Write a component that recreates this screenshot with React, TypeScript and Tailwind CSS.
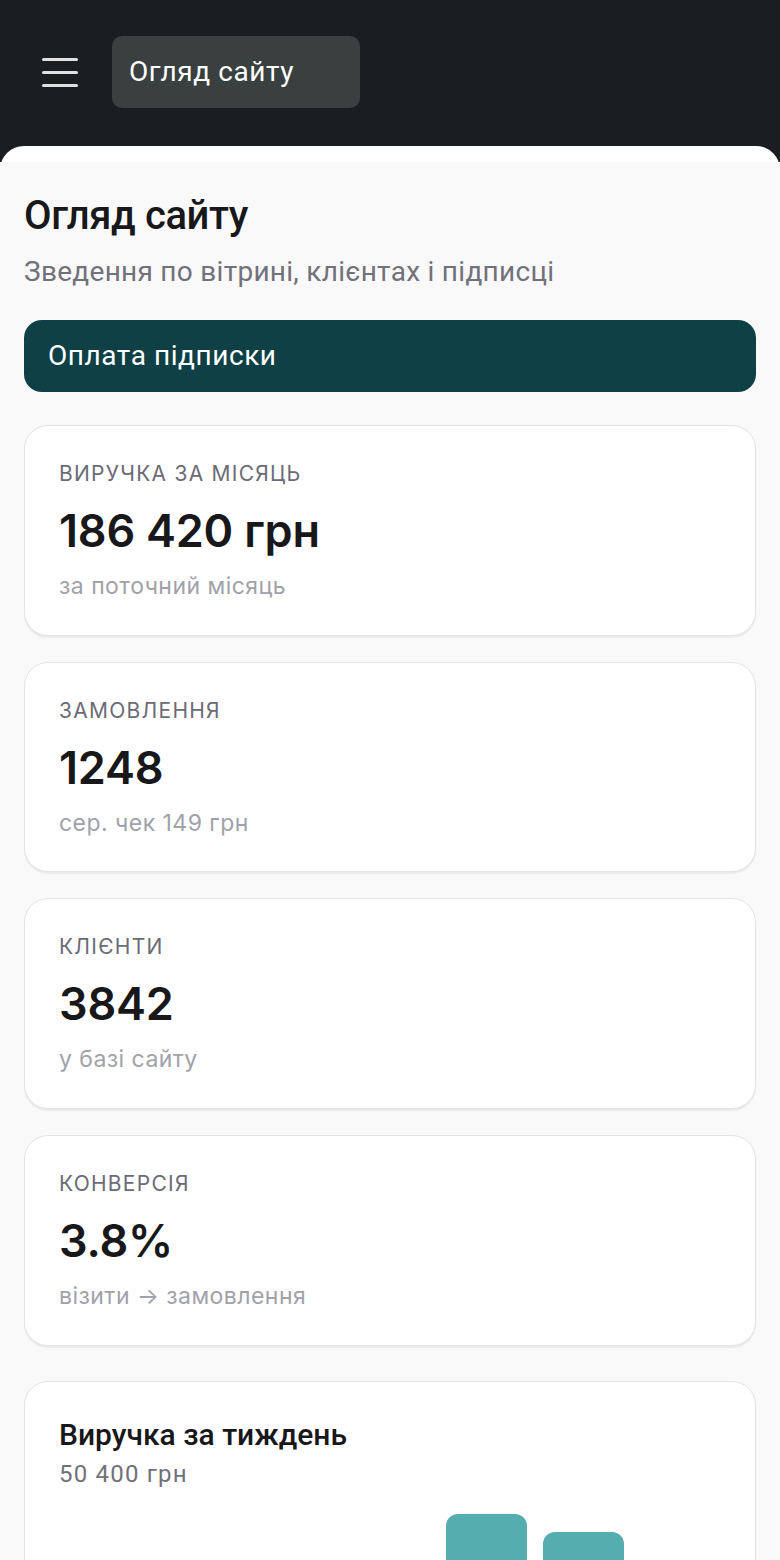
import React from 'react'

interface Stat {
  label: string
  value: string
  note: string
}

const STATS: Stat[] = [
  { label: 'Виручка за місяць', value: '186 420 грн', note: 'за поточний місяць' },
  { label: 'Замовлення', value: '1248', note: 'сер. чек 149 грн' },
  { label: 'Клієнти', value: '3842', note: 'у базі сайту' },
  { label: 'Конверсія', value: '3.8%', note: 'візити → замовлення' },
]

// week revenue, share of the max day
const WEEK = [52, 61, 58, 70, 100, 91, 66]

const roboto = { fontFamily: 'Roboto, "Noto Sans", sans-serif' }
const inter = { fontFamily: 'Inter, "Noto Sans", sans-serif' }

function StatCard({ stat }: { stat: Stat }) {
  return (
    <div
      className="bg-white rounded-[24px] border border-[#e4e4e7] shadow-[0_2px_1px_rgba(0,0,0,0.06)] px-[34px] pt-[35px] pb-[33.67px]"
      style={inter}
    >
      <div className="text-[21px] leading-[26px] uppercase tracking-[0.06em] text-[#6b6b76]">{stat.label}</div>
      <div className="mt-[17px] text-[45px] leading-[54px] font-semibold tracking-[-0.005em] text-[#18181b]">
        {stat.value}
      </div>
      <div className="mt-[13px] text-[23px] leading-[30px] tracking-[0.02em] text-[#a1a1aa]">{stat.note}</div>
    </div>
  )
}

export default function App() {
  return (
    <div className="min-h-screen bg-[#1a1e21]">
      {/* Top bar */}
      <div className="flex items-center pt-9 pb-[38px] pl-[42px]" style={roboto}>
        <button className="flex flex-col gap-[10px] w-9 mr-[34px]">
          <span className="block h-[3px] w-9 rounded-full bg-[#e0e0e0]" />
          <span className="block h-[3px] w-9 rounded-full bg-[#e0e0e0]" />
          <span className="block h-[3px] w-9 rounded-full bg-[#e0e0e0]" />
        </button>
        <div className="h-[72px] w-[248px] rounded-[10px] bg-[#3a3f40] flex items-center px-[17px] text-white text-[28px] tracking-[0.02em]">
          Огляд сайту
        </div>
      </div>

      {/* Content panel */}
      <div className="bg-white rounded-t-[24px] pt-4">
        <div className="bg-[#f9f9f9] px-6 pt-[30px] pb-10 min-h-[1400px]">
          <h1 className="text-[40px] leading-[48px] font-medium text-[#18181b] tracking-[-0.01em]" style={roboto}>
            Огляд сайту
          </h1>
          <p className="mt-[14px] text-[28px] leading-[36px] tracking-[0.01em] text-[#71717a]" style={roboto}>
            Зведення по вітрині, клієнтах і підписці
          </p>

          <button
            className="mt-[30px] w-full h-[72px] rounded-[18px] bg-[#0e4046] text-white text-[28px] tracking-[0.02em] text-left px-6"
            style={roboto}
          >
            Оплата підписки
          </button>

          <div className="mt-[33px] flex flex-col gap-[26px]">
            {STATS.map(s => (
              <StatCard key={s.label} stat={s} />
            ))}

            {/* Week chart */}
            <div className="mt-[9px] bg-white rounded-[24px] border border-[#e4e4e7] shadow-[0_2px_1px_rgba(0,0,0,0.06)] px-[34px] pt-[35px] pb-[34px]">
              <div className="text-[30px] leading-[36px] font-medium text-[#18181b]" style={roboto}>
                Виручка за тиждень
              </div>
              <div className="mt-[6px] text-[24px] leading-[30px] tracking-[0.05em] text-[#71717a]" style={roboto}>
                50 400 грн
              </div>
              <div className="mt-[25px] h-[200px] flex items-end gap-4">
                {WEEK.map((h, i) => (
                  <div
                    key={i}
                    className="flex-1 rounded-t-[12px] bg-[#56adb0]"
                    style={{ height: `${h}%` }}
                  />
                ))}
              </div>
            </div>
          </div>
        </div>
      </div>
    </div>
  )
}
